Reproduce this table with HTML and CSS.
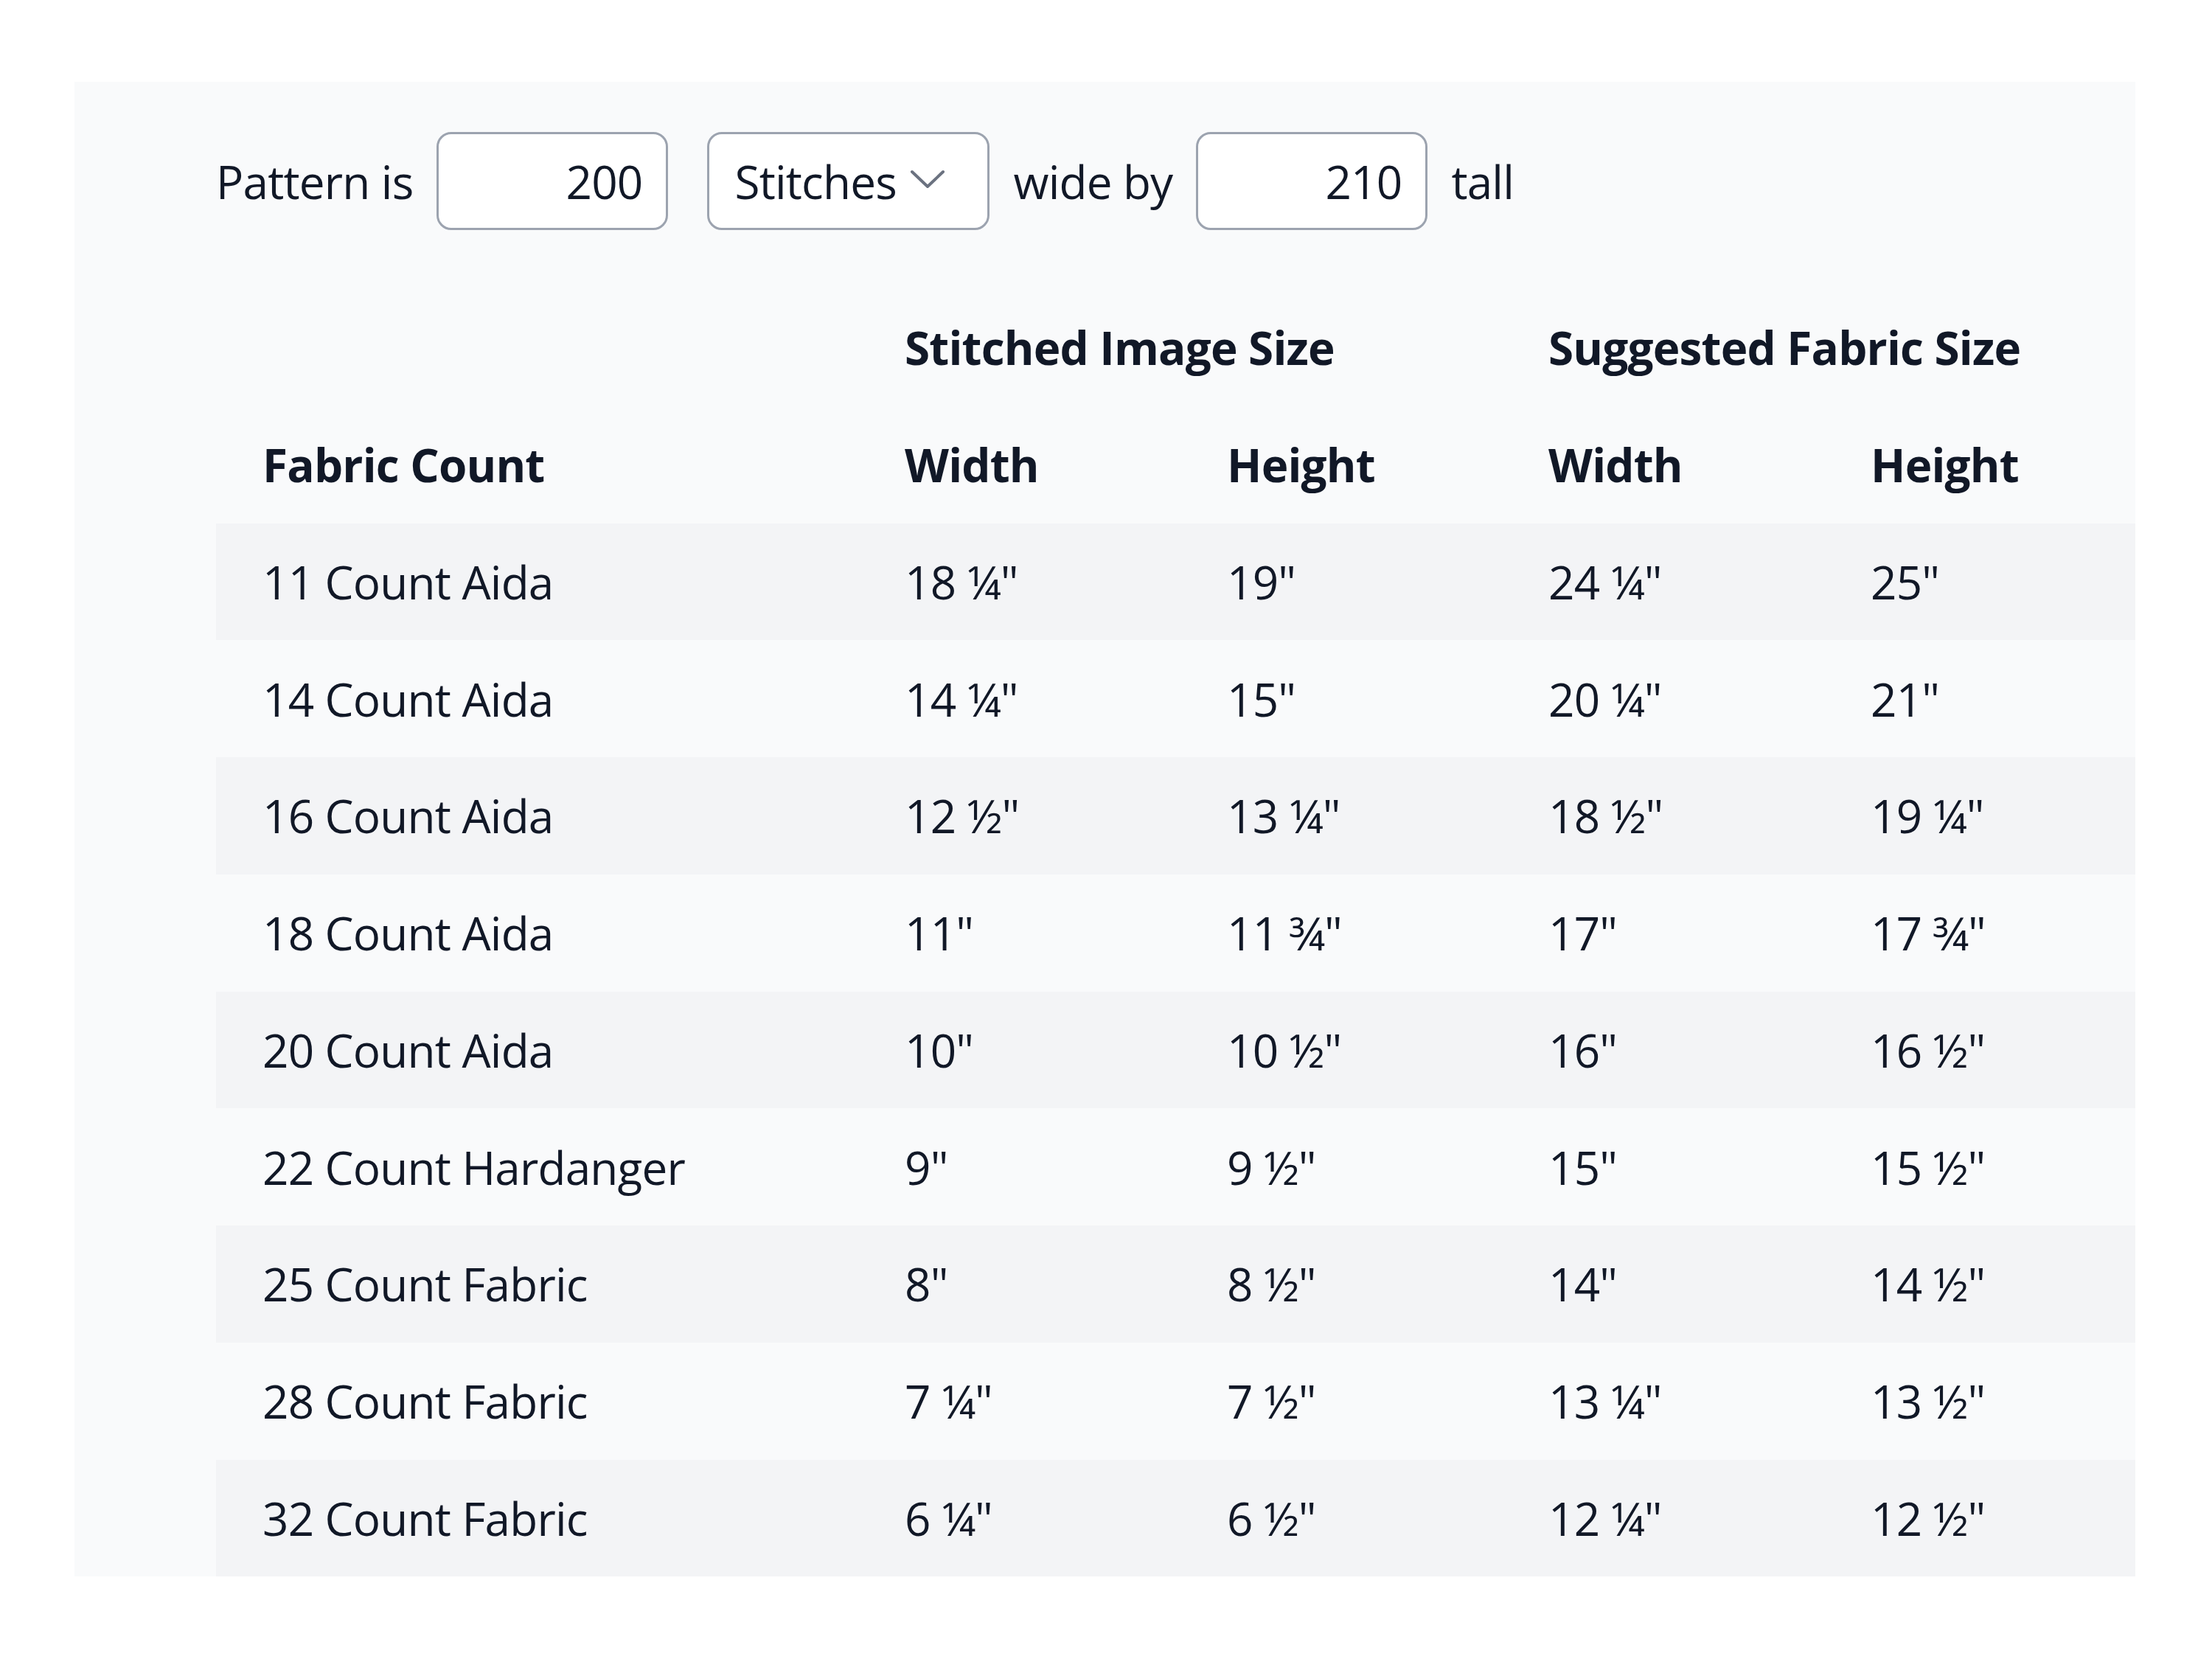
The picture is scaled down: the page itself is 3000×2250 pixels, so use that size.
FILE: index.html
```html
<!DOCTYPE html>
<html lang="en">
<head>
<meta charset="utf-8">
<title>Fabric Size Calculator</title>
<link rel="stylesheet" href="styles.css">
</head>
<body>
<div class="page">
  <section class="panel">
    <div class="controls">
      <span class="label">Pattern is</span>
      <div class="field num">200</div>
      <div class="field select">
        <span>Stitches</span>
        <svg class="chev" viewBox="0 0 48 26" width="48" height="26"><path d="M3 3 L24 23 L45 3" fill="none" stroke="#6b7280" stroke-width="4" stroke-linecap="round" stroke-linejoin="round"/></svg>
      </div>
      <span class="label">wide by</span>
      <div class="field num">210</div>
      <span class="label">tall</span>
    </div>
    <table class="sizes">
      <colgroup>
        <col class="c1"><col class="c2"><col class="c3"><col class="c4"><col class="c5">
      </colgroup>
      <thead>
        <tr>
          <th></th>
          <th colspan="2">Stitched Image Size</th>
          <th colspan="2">Suggested Fabric Size</th>
        </tr>
        <tr>
          <th>Fabric Count</th>
          <th>Width</th>
          <th>Height</th>
          <th>Width</th>
          <th>Height</th>
        </tr>
      </thead>
      <tbody>
        <tr><td>11 Count Aida</td><td>18 ¼"</td><td>19"</td><td>24 ¼"</td><td>25"</td></tr>
        <tr><td>14 Count Aida</td><td>14 ¼"</td><td>15"</td><td>20 ¼"</td><td>21"</td></tr>
        <tr><td>16 Count Aida</td><td>12 ½"</td><td>13 ¼"</td><td>18 ½"</td><td>19 ¼"</td></tr>
        <tr><td>18 Count Aida</td><td>11"</td><td>11 ¾"</td><td>17"</td><td>17 ¾"</td></tr>
        <tr><td>20 Count Aida</td><td>10"</td><td>10 ½"</td><td>16"</td><td>16 ½"</td></tr>
        <tr><td>22 Count Hardanger</td><td>9"</td><td>9 ½"</td><td>15"</td><td>15 ½"</td></tr>
        <tr><td>25 Count Fabric</td><td>8"</td><td>8 ½"</td><td>14"</td><td>14 ½"</td></tr>
        <tr><td>28 Count Fabric</td><td>7 ¼"</td><td>7 ½"</td><td>13 ¼"</td><td>13 ½"</td></tr>
        <tr><td>32 Count Fabric</td><td>6 ¼"</td><td>6 ½"</td><td>12 ¼"</td><td>12 ½"</td></tr>
      </tbody>
    </table>
  </section>
</div>
</body>
</html>
```

FILE: styles.css
```css
html, body {
  margin: 0;
  padding: 0;
  background: #ffffff;
}

body {
  font-family: "Open Sans", "Noto Sans", sans-serif;
  font-size: 62px;
  letter-spacing: -0.8px;
  color: #111827;
}

.page {
  padding: 111px 104px 0 101px;
}

.panel {
  background: #f9fafb;
  padding: 68px 0 0 192px;
}

.controls {
  display: flex;
  align-items: center;
  gap: 32px;
  height: 133px;
}

.label {
  white-space: nowrap;
}

.field {
  box-sizing: border-box;
  height: 133px;
  background: #ffffff;
  border: 3px solid #9ca3af;
  border-radius: 20px;
  display: flex;
  align-items: center;
}

.num {
  width: 314px;
  justify-content: flex-end;
  padding-right: 32px;
}

.select {
  width: 383px;
  padding-left: 34px;
  padding-right: 57px;
  justify-content: space-between;
  margin-left: 21px;
}

.chev {
  display: block;
  margin-top: -6px;
}

.sizes {
  margin-top: 80px;
  border-collapse: collapse;
  border-spacing: 0;
  table-layout: fixed;
  width: 2603px;
}

.c1 { width: 871px; }
.c2 { width: 437px; }
.c3 { width: 436px; }
.c4 { width: 437px; }
.c5 { width: 422px; }

.sizes tr {
  height: 158.75px;
}

.sizes th,
.sizes td {
  padding: 0 0 0 63px;
  text-align: left;
  vertical-align: middle;
  white-space: nowrap;
}

.sizes th {
  font-weight: 700;
}

.sizes td {
  font-weight: 400;
}

.sizes tbody tr:nth-child(odd) {
  background: #f3f4f6;
}
```
